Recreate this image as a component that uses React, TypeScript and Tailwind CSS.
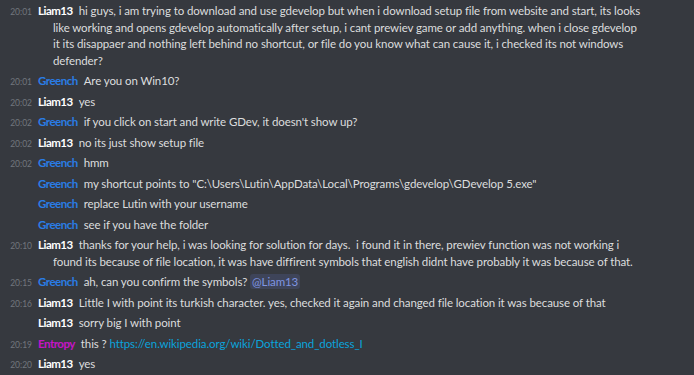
import React from "react";

type Msg = {
  time?: string;
  name: string;
  color: string;
  body: React.ReactNode;
};

const LIAM = "text-white";
const GREENCH = "text-[#2a7de6]";
const ENTROPY = "text-[#c614c6]";

const msgs: Msg[] = [
  {
    time: "20:01",
    name: "Liam13",
    color: LIAM,
    body:
      "hi guys, i am trying to download and use gdevelop but when i download setup file from website and start, its looks like working and opens gdevelop automatically after setup, i cant prewiev game or add anything. when i close gdevelop it its disappaer and nothing left behind no shortcut, or file do you know what can cause it, i checked its not windows defender?",
  },
  { time: "20:01", name: "Greench", color: GREENCH, body: "Are you on Win10?" },
  { time: "20:02", name: "Liam13", color: LIAM, body: "yes" },
  {
    time: "20:02",
    name: "Greench",
    color: GREENCH,
    body: "if you click on start and write GDev, it doesn't show up?",
  },
  { time: "20:02", name: "Liam13", color: LIAM, body: "no its just show setup file" },
  { time: "20:02", name: "Greench", color: GREENCH, body: "hmm" },
  {
    name: "Greench",
    color: GREENCH,
    body: 'my shortcut points to "C:\\Users\\Lutin\\AppData\\Local\\Programs\\gdevelop\\GDevelop 5.exe"',
  },
  { name: "Greench", color: GREENCH, body: "replace Lutin with your username" },
  { name: "Greench", color: GREENCH, body: "see if you have the folder" },
  {
    time: "20:10",
    name: "Liam13",
    color: LIAM,
    body:
      "thanks for your help, i was looking for solution for days.\u00a0 i found it in there, prewiev function was not working i found its because of file location, it was have diffirent symbols that english didnt have probably it was because of that.",
  },
  {
    time: "20:15",
    name: "Greench",
    color: GREENCH,
    body: (
      <>
        ah, can you confirm the symbols?{" "}
        <span className="rounded-[3px] bg-[#3e4459] px-[2px] py-[1px] text-[#7f95e2]">@Liam13</span>
      </>
    ),
  },
  {
    time: "20:16",
    name: "Liam13",
    color: LIAM,
    body: "Little I with point its turkish character. yes, checked it again and changed file location it was because of that",
  },
  { name: "Liam13", color: LIAM, body: "sorry big I with point" },
  {
    time: "20:19",
    name: "Entropy",
    color: ENTROPY,
    body: (
      <>
        this ?{" "}
        <span className="text-[#0aa3dc]">https://en.wikipedia.org/wiki/Dotted_and_dotless_I</span>
      </>
    ),
  },
  { time: "20:20", name: "Liam13", color: LIAM, body: "yes" },
];

export default function App() {
  return (
    <div
      className="h-[375px] w-[694px] overflow-hidden bg-[#36393f] pt-[1px] pr-[48px] text-[11.5px] leading-[16.5px] tracking-[-0.1px] text-[#dcddde]"
      style={{ fontFamily: "Lato, 'Open Sans', sans-serif" }}
    >
      {msgs.map((m, i) => (
        <div key={i} className="py-[2px] pl-[53px] -indent-[45px]">
          <span className="inline-block w-[24px] indent-0 text-right align-baseline text-[8.5px] leading-[8px] tracking-normal text-[#72767d]">
            {m.time ?? ""}
          </span>
          <span className={`ml-[6px] font-bold tracking-[-0.5px] ${m.color}`}>{m.name}</span>
          <span className="ml-[6px]">{m.body}</span>
        </div>
      ))}
    </div>
  );
}
